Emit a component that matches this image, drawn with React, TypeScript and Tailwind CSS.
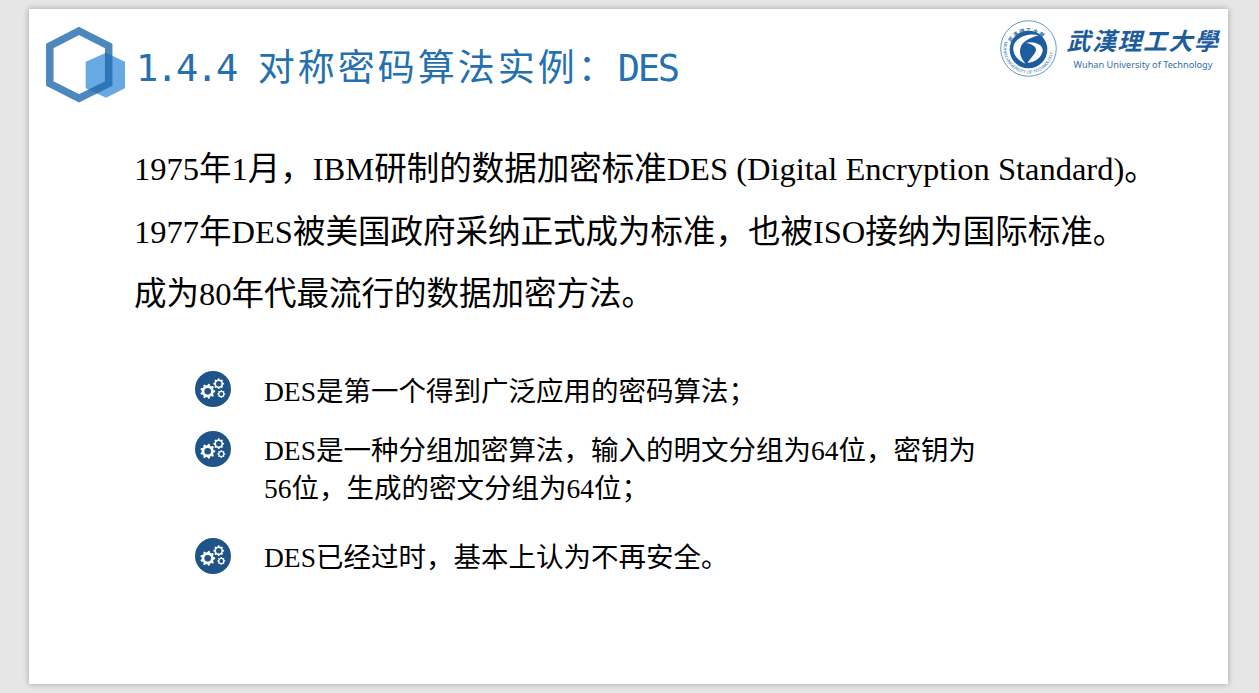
import React from "react";

const gearPath = (cx: number, cy: number, r: number, teeth: number) => {
  const pts: string[] = [];
  const inn = r * 0.8;
  const step = (Math.PI * 2) / teeth;
  for (let i = 0; i < teeth; i++) {
    const a = i * step;
    const angs: [number, number][] = [
      [a - step * 0.32, inn],
      [a - step * 0.14, r],
      [a + step * 0.14, r],
      [a + step * 0.32, inn],
    ];
    for (const [t, rr] of angs) pts.push(`${(cx + Math.cos(t) * rr).toFixed(2)},${(cy + Math.sin(t) * rr).toFixed(2)}`);
  }
  return "M" + pts.join("L") + "Z";
};

function GearBadge() {
  return (
    <svg width="36" height="36" viewBox="0 0 36 36" className="shrink-0">
      <circle cx="18" cy="18" r="18" fill="#1f5488" />
      <path d={gearPath(12.7, 20.3, 7.5, 9)} fill="#fff" />
      <circle cx="12.7" cy="20.3" r="3.3" fill="#1f5488" />
      <path d={gearPath(23.7, 12.7, 5.4, 8)} fill="#fff" />
      <circle cx="23.7" cy="12.7" r="2.7" fill="#1f5488" />
      <path d={gearPath(26.3, 23, 4, 8)} fill="#fff" />
      <circle cx="26.3" cy="23" r="1.9" fill="#1f5488" />
    </svg>
  );
}

function HexLogo() {
  return (
    <svg width="81" height="78" viewBox="0 0 81 78" className="shrink-0">
      <polygon points="61,26.7 80,35.7 80,62.3 61,71.7 40.7,62.3 40.7,35.7" fill="#3d8fdb" fillOpacity="0.78" />
      <polygon points="34,5 63.7,20 63.7,57.5 34,72.3 4.8,57.5 4.8,20" fill="none" stroke="#1f69ac" strokeOpacity="0.8" strokeWidth="7.5" />
    </svg>
  );
}

function Seal() {
  return (
    <svg width="57" height="57" viewBox="0 0 56 56" className="shrink-0">
      <defs>
        <path id="ringTop" d="M8,28 A20.5,20.5 0 0 1 48,28" />
        <path id="ringBottom" d="M5,19.6 A24.5,24.5 0 1 0 51,19.6" />
      </defs>
      <circle cx="28" cy="28" r="27.3" fill="#fff" stroke="#2f6eab" strokeWidth="0.7" />
      <circle cx="28" cy="29" r="18.5" fill="#1d5c9e" />
      <path d="M38,15 C27,12 13,18 13,28 C13,35 18,40 25,43 C20,37 18,31 21,25 C24,20 31,17 38,15Z" fill="#fff" />
      <path d="M25,22.5 C32,23 37,27 35,31 C33,35 30,38 27,42 C34,42 41,37 42,30 C42,24 34,20 25,22.5Z" fill="#fff" />
      <text className="font-['Noto_Sans_CJK_SC',sans-serif]" fontSize="5" fontWeight="700" fill="#2b6aa7">
        <textPath href="#ringTop" startOffset="12%" letterSpacing="1.2">武漢理工大學</textPath>
      </text>
      <text className="font-['Liberation_Sans',sans-serif]" fontSize="4.2" fill="#2b6aa7">
        <textPath href="#ringBottom" startOffset="2%">WUHAN UNIVERSITY OF TECHNOLOGY</textPath>
      </text>
    </svg>
  );
}

const bullet = "flex items-start gap-[33px] text-[27.5px] leading-[38px] text-black";

export default function App() {
  return (
    <div className="h-[693px] w-[1259px] overflow-hidden bg-[#e6e6e6] pl-[29px] pt-[9px] font-['Liberation_Serif','Noto_Sans_CJK_SC',serif]">
      <div className="h-[675px] w-[1199px] bg-white shadow-[0_0_6px_rgba(0,0,0,0.3)]">
        <header className="flex items-start justify-between pl-[16px] pr-[9px] pt-[17px]">
          <div className="flex items-start gap-[10px]">
            <HexLogo />
            <h1 className="whitespace-nowrap pt-[15px] font-['DejaVu_Sans_Mono','Noto_Sans_CJK_SC',monospace] text-[37px] font-normal leading-[48px] tracking-[-2.3px] text-[#2470b0]">
              <span>1.4.4 </span>
              <span className="ml-[2px] font-['Noto_Sans_CJK_SC',sans-serif] text-[37px] tracking-[3px]">对称密码算法实例：</span>
              <span>DES</span>
            </h1>
          </div>
          <div className="-mt-[6px] flex items-center gap-[10px]">
            <Seal />
            <div className="flex w-[152px] flex-col items-center pt-[2px]">
              <div className="whitespace-nowrap text-[24px] font-bold italic leading-[28px] tracking-[1.5px] text-[#1d5c9e]">武漢理工大學</div>
              <div className="mt-[2px] font-['Noto_Sans',sans-serif] text-[9.2px] leading-[14px] text-[#2f6eab]">Wuhan University of Technology</div>
            </div>
          </div>
        </header>

        <main className="pl-[105px] pt-[42px]">
          <div className="flex flex-col gap-[16.5px] text-[32.5px] leading-[46px] text-black">
            <p className="whitespace-nowrap">1975年1月，IBM研制的数据加密标准DES (Digital Encryption Standard)。</p>
            <p className="whitespace-nowrap">1977年DES被美国政府采纳正式成为标准，也被ISO接纳为国际标准。</p>
            <p className="whitespace-nowrap">成为80年代最流行的数据加密方法。</p>
          </div>
          <ul className="mt-[54px] flex flex-col pl-[61px]">
            <li className={bullet}>
              <GearBadge />
              <span className="whitespace-nowrap pt-[2px]">DES是第一个得到广泛应用的密码算法；</span>
            </li>
            <li className={`${bullet} mt-[20px]`}>
              <GearBadge />
              <span className="w-[760px] pt-[1px]">DES是一种分组加密算法，输入的明文分组为64位，密钥为<br />56位，生成的密文分组为64位；</span>
            </li>
            <li className={`${bullet} mt-[30px]`}>
              <GearBadge />
              <span className="whitespace-nowrap pt-[1px]">DES已经过时，基本上认为不再安全。</span>
            </li>
          </ul>
        </main>
      </div>
    </div>
  );
}
